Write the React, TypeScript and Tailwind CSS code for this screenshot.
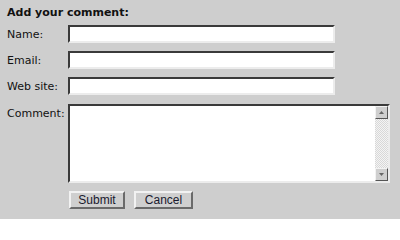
const field =
  "h-[18px] w-[267px] bg-white border-2 border-t-[#3a3a3a] border-l-[#3a3a3a] border-b-[#ececec] border-r-[#ececec] outline-none";

const btn =
  "h-[18px] bg-[#cfcfcf] border-2 border-t-[#f2f2f2] border-l-[#f2f2f2] border-b-[#6a6a6a] border-r-[#6a6a6a] text-[12px] text-[#1a1a2e] leading-none font-['Liberation_Sans',Arial,sans-serif]";

function Row({ label, children }: { label: string; children: React.ReactNode }) {
  return (
    <div className="flex items-start">
      <label className="w-[61px] pt-[3px] text-[11px] leading-[13px]">{label}</label>
      {children}
    </div>
  );
}

export default function App() {
  return (
    <div className="w-[400px] h-[219px] bg-[#cecece] pl-[7px] pt-[6px] text-[#111] font-['DejaVu_Sans',Verdana,sans-serif]">
      <h3 className="text-[11px] leading-[13px] font-bold">Add your comment:</h3>
      <div className="mt-[6px] flex flex-col gap-[8px]">
        <Row label="Name:">
          <input className={field} />
        </Row>
        <Row label="Email:">
          <input className={field} />
        </Row>
        <Row label="Web site:">
          <input className={field} />
        </Row>
        <div className="mt-[1px]">
          <Row label="Comment:">
            <div className="flex h-[79px] w-[322px] bg-white border-2 border-t-[#3a3a3a] border-l-[#3a3a3a] border-b-[#ececec] border-r-[#ececec]">
              <textarea className="flex-1 resize-none outline-none overflow-hidden" />
              <div className="flex w-[13px] flex-col bg-[repeating-conic-gradient(#d8d8d8_0_25%,#f4f4f4_0_50%)] bg-[length:2px_2px]">
                <div className="flex h-[13px] items-center justify-center bg-[#cfcfcf] border border-t-[#f2f2f2] border-l-[#f2f2f2] border-b-[#555] border-r-[#555]">
                  <svg width="5" height="3" viewBox="0 0 5 3">
                    <path d="M2.5 0 L5 3 L0 3 Z" fill="#666" />
                  </svg>
                </div>
                <div className="flex-1" />
                <div className="flex h-[13px] items-center justify-center bg-[#cfcfcf] border border-t-[#f2f2f2] border-l-[#f2f2f2] border-b-[#555] border-r-[#555]">
                  <svg width="5" height="3" viewBox="0 0 5 3">
                    <path d="M0 0 L5 0 L2.5 3 Z" fill="#666" />
                  </svg>
                </div>
              </div>
            </div>
          </Row>
        </div>
      </div>
      <div className="mt-[8px] ml-[62px] flex gap-[9px]">
        <button className={`${btn} w-[56px]`}>Submit</button>
        <button className={`${btn} w-[59px]`}>Cancel</button>
      </div>
    </div>
  );
}
